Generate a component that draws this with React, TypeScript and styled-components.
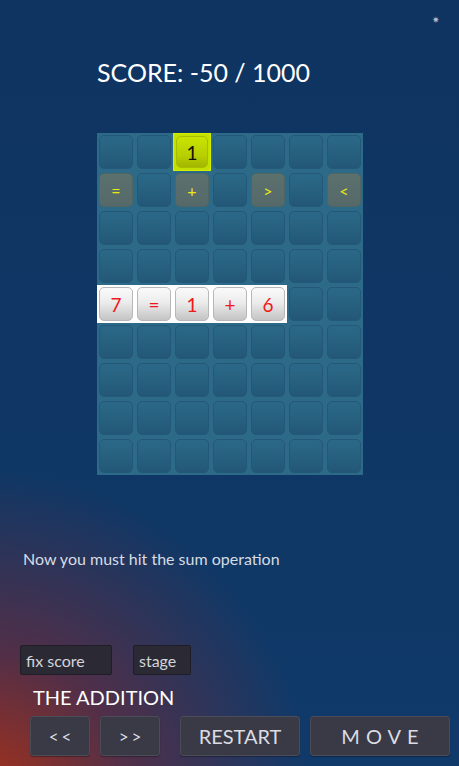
import React from "react";
import styled, { createGlobalStyle, css } from "styled-components";

const Global = createGlobalStyle`
  html, body { margin: 0; padding: 0; }
  body {
    width: 459px; height: 766px; overflow: hidden;
    font-family: Lato, "Open Sans", sans-serif;
    background:
      radial-gradient(ellipse 330px 330px at -20px 800px, rgba(180,48,18,0.95) 0%, rgba(125,40,50,0.6) 45%, rgba(15,52,98,0) 100%),
      linear-gradient(180deg, #0f3462 0%, #0f3765 60%, #103a6a 100%);
  }
`;

const Page = styled.div`
  position: relative;
  width: 459px;
  height: 766px;
  display: flex;
  flex-direction: column;
`;

const Star = styled.div`
  position: absolute;
  top: 14px;
  left: 432px;
  color: #b8bcc8;
  font-size: 9px;
`;

const Score = styled.h1`
  margin: 57px 0 0 97px;
  font-size: 25px;
  font-weight: 400;
  color: #ffffff;
  line-height: 30px;
`;

const Board = styled.div`
  margin: 46px 0 0 97px;
  width: 266px;
  height: 342px;
  background: #2d6a88;
  display: grid;
  grid-template-columns: repeat(7, 38px);
  grid-template-rows: repeat(9, 38px);
`;

type Kind = "empty" | "op" | "hit" | "white";

const Cell = styled.div<{ $kind: Kind }>`
  display: flex;
  align-items: center;
  justify-content: center;
  padding: 2px;
  box-sizing: border-box;
  ${(p) => p.$kind === "hit" && css`background: #c4e000; border: 1px solid #d4f000;`}
  ${(p) => p.$kind === "white" && css`background: #ffffff;`}
`;

const Tile = styled.div<{ $kind: Kind }>`
  width: 100%;
  height: 100%;
  border-radius: 5px;
  box-sizing: border-box;
  display: flex;
  align-items: center;
  justify-content: center;
  font-family: Lato, sans-serif;
  ${(p) =>
    p.$kind === "empty" &&
    css`
      background: linear-gradient(180deg, #2b6888 0%, #27607f 55%, #235777 100%);
      border: 1px solid #24587a;
    `}
  ${(p) =>
    p.$kind === "op" &&
    css`
      background: linear-gradient(180deg, #5b716d 0%, #56696a 100%);
      border: 1px solid #4f6664;
      color: #eaea10;
      font-size: 16px;
    `}
  ${(p) =>
    p.$kind === "hit" &&
    css`
      background: linear-gradient(180deg, #c8e400 0%, #b8d000 60%, #a4b600 100%);
      border: 1px solid #a8bc00;
      color: #101000;
      font-size: 19px;
    `}
  ${(p) =>
    p.$kind === "white" &&
    css`
      background: linear-gradient(180deg, #fafafa 0%, #ececec 45%, #c4c4c4 100%);
      border: 1px solid #b8b8b8;
      color: #f01818;
      font-size: 19px;
    `}
`;

const Hint = styled.p`
  margin: 74px 0 0 23px;
  font-size: 16px;
  color: #d6dce4;
  line-height: 19px;
`;

const Inputs = styled.div`
  display: flex;
  gap: 21px;
  margin: 77px 0 0 20px;
`;

const Field = styled.input<{ $w: number }>`
  width: ${(p) => p.$w}px;
  height: 30px;
  box-sizing: border-box;
  background: #2b2a34;
  border: 1px solid #1f1e26;
  border-radius: 2px;
  color: #d4d4da;
  font-family: Lato, sans-serif;
  font-size: 16px;
  padding: 0 5px;
  outline: none;
  &::placeholder { color: #d4d4da; }
`;

const Title = styled.div`
  margin: 11px 0 0 33px;
  color: #ffffff;
  font-size: 20px;
  line-height: 22px;
`;

const Buttons = styled.div`
  display: flex;
  gap: 10px;
  margin: 8px 0 0 30px;
`;

const Btn = styled.button<{ $w: number; $gapL?: number; $ls?: number; $fs?: number }>`
  width: ${(p) => p.$w}px;
  height: 40px;
  margin-left: ${(p) => p.$gapL ?? 0}px;
  background: #3a3a46;
  border: 1px solid #4c4c58;
  border-radius: 3px;
  color: #dcdce2;
  font-family: Lato, sans-serif;
  font-size: ${(p) => p.$fs ?? 20}px;
  letter-spacing: ${(p) => p.$ls ?? 0}px;
  padding: 0 0 0 ${(p) => p.$ls ?? 0}px;
  box-shadow: 0 1px 1px rgba(0,0,0,0.3);
`;

const ops: Record<number, string> = { 0: "=", 2: "+", 4: ">", 6: "<" };
const whites = ["7", "=", "1", "+", "6"];

export default function App() {
  const cells: React.ReactNode[] = [];
  for (let r = 0; r < 9; r++) {
    for (let c = 0; c < 7; c++) {
      let kind: Kind = "empty";
      let text = "";
      if (r === 0 && c === 2) {
        kind = "hit";
        text = "1";
      } else if (r === 1 && ops[c]) {
        kind = "op";
        text = ops[c];
      } else if (r === 4 && c < 5) {
        kind = "white";
        text = whites[c];
      }
      cells.push(
        <Cell key={`${r}-${c}`} $kind={kind}>
          <Tile $kind={kind}>{text}</Tile>
        </Cell>
      );
    }
  }
  return (
    <>
      <Global />
      <Page>
        <Star>✷</Star>
        <Score>SCORE: -50 / 1000</Score>
        <Board>{cells}</Board>
        <Hint>Now you must hit the sum operation</Hint>
        <Inputs>
          <Field $w={92} placeholder="fix score" />
          <Field $w={58} placeholder="stage" />
        </Inputs>
        <Title>THE ADDITION</Title>
        <Buttons>
          <Btn $w={60} $fs={17} $ls={3}>&lt;&lt;</Btn>
          <Btn $w={60} $fs={17} $ls={3}>&gt;&gt;</Btn>
          <Btn $w={120} $gapL={10}>RESTART</Btn>
          <Btn $w={140} $ls={6}>MOVE</Btn>
        </Buttons>
      </Page>
    </>
  );
}
